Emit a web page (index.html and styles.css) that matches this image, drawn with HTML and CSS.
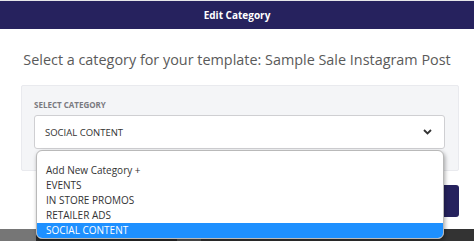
FILE: index.html
```html
<html lang="en">
<head>
    <meta charset="UTF-8">
    <meta name="viewport" content="width=device-width, initial-scale=1.0">
    <title> Edit Category </title>
    <link rel="stylesheet" href="styles.css">
</head>
<body>
    <div class="topline"></div>
    <div class="modal_header">
        <strong> Edit Category </strong>
    </div>
    <div class="modal_body">
        <p class="subtitle"> Select a category for your template: Sample Sale Instagram Post </p>
        <div class="panel">
            <div class="field_label"> SELECT CATEGORY </div>
            <div class="select_wrap">
                <div class="select_box">
                    <span> SOCIAL CONTENT </span>
                    <svg class="chevron" width="9" height="6" viewBox="0 0 9 6">
                        <polyline points="1,1 4.5,4.5 8,1" fill="none" stroke="#333" stroke-width="1.8"/>
                    </svg>
                </div>
                <ul class="options" id="category_options">
                    <li> Add New Category + </li>
                    <li> EVENTS </li>
                    <li> IN STORE PROMOS </li>
                    <li> RETAILER ADS </li>
                    <li class="selected"> SOCIAL CONTENT </li>
                </ul>
            </div>
        </div>
        <div class="actions">
            <button class="btn_save"> Save </button>
        </div>
    </div>
    <div class="backdrop">
        <div class="bd_left"></div>
        <div class="bd_dark"></div>
        <div class="bd_light"></div>
        <div class="bd_dark2"></div>
    </div>
</body>
</html>
```

FILE: styles.css
```css
body {
    margin: 0;
    background: #fff;
    font-family: "Open Sans", "Liberation Sans", sans-serif;
    overflow: hidden;
}
.topline {
    height: 1px;
    background: #e6e6e9;
}
.modal_header {
    height: 28px;
    background: #26225e;
    color: #fff;
    font-size: 10px;
    display: flex;
    align-items: center;
    justify-content: center;
}
.modal_body {
    padding: 21px 0 12px;
}
.subtitle {
    margin: 0 0 16px;
    text-align: center;
    font-size: 14.4px;
    line-height: 19px;
    color: #5a5a5a;
}
.panel {
    margin: 0 15px 0 21px;
    padding: 15px 13px 21px 12px;
    background: #f4f5f7;
    border: 1px solid #e9eaee;
    border-radius: 2px;
}
.field_label {
    font-size: 8px;
    line-height: 8px;
    font-weight: bold;
    color: #7a7a80;
    margin-bottom: 6px;
}
.select_wrap {
    position: relative;
}
.select_box {
    height: 32px;
    border: 1px solid #cfcfd2;
    border-radius: 3px;
    background: #fff;
    display: flex;
    align-items: center;
    justify-content: space-between;
    padding: 0 12px 0 10px;
    font-size: 9.5px;
    color: #333;
}
.chevron {
    display: block;
}
.options {
    position: absolute;
    top: calc(100% + 1px);
    left: 2px;
    right: 1px;
    margin: 0;
    padding: 12px 0 0;
    list-style: none;
    background: #fff;
    border: 1px solid #b9b9b9;
    border-radius: 6px;
    overflow: hidden;
    box-shadow: 1px 2px 4px rgba(0, 0, 0, 0.35);
    z-index: 2;
}
.options li {
    height: 15px;
    line-height: 15px;
    padding-left: 9px;
    font-size: 10px;
    color: #333;
}
.options .selected {
    background: #1e90ff;
    color: #fff;
}
.actions {
    display: flex;
    justify-content: flex-end;
    margin: 14px 15px 0 0;
}
.btn_save {
    width: 80px;
    height: 32px;
    border: none;
    border-radius: 3px;
    background: #26225e;
    color: #fff;
    font-family: inherit;
}
.backdrop {
    display: flex;
    height: 14px;
}
.bd_left {
    width: 36px;
    background: #767676;
}
.bd_dark {
    width: 141px;
    background: #2a2a2a;
}
.bd_light {
    width: 24px;
    background: #555;
}
.bd_dark2 {
    flex: 1;
    background: #333;
}
```
